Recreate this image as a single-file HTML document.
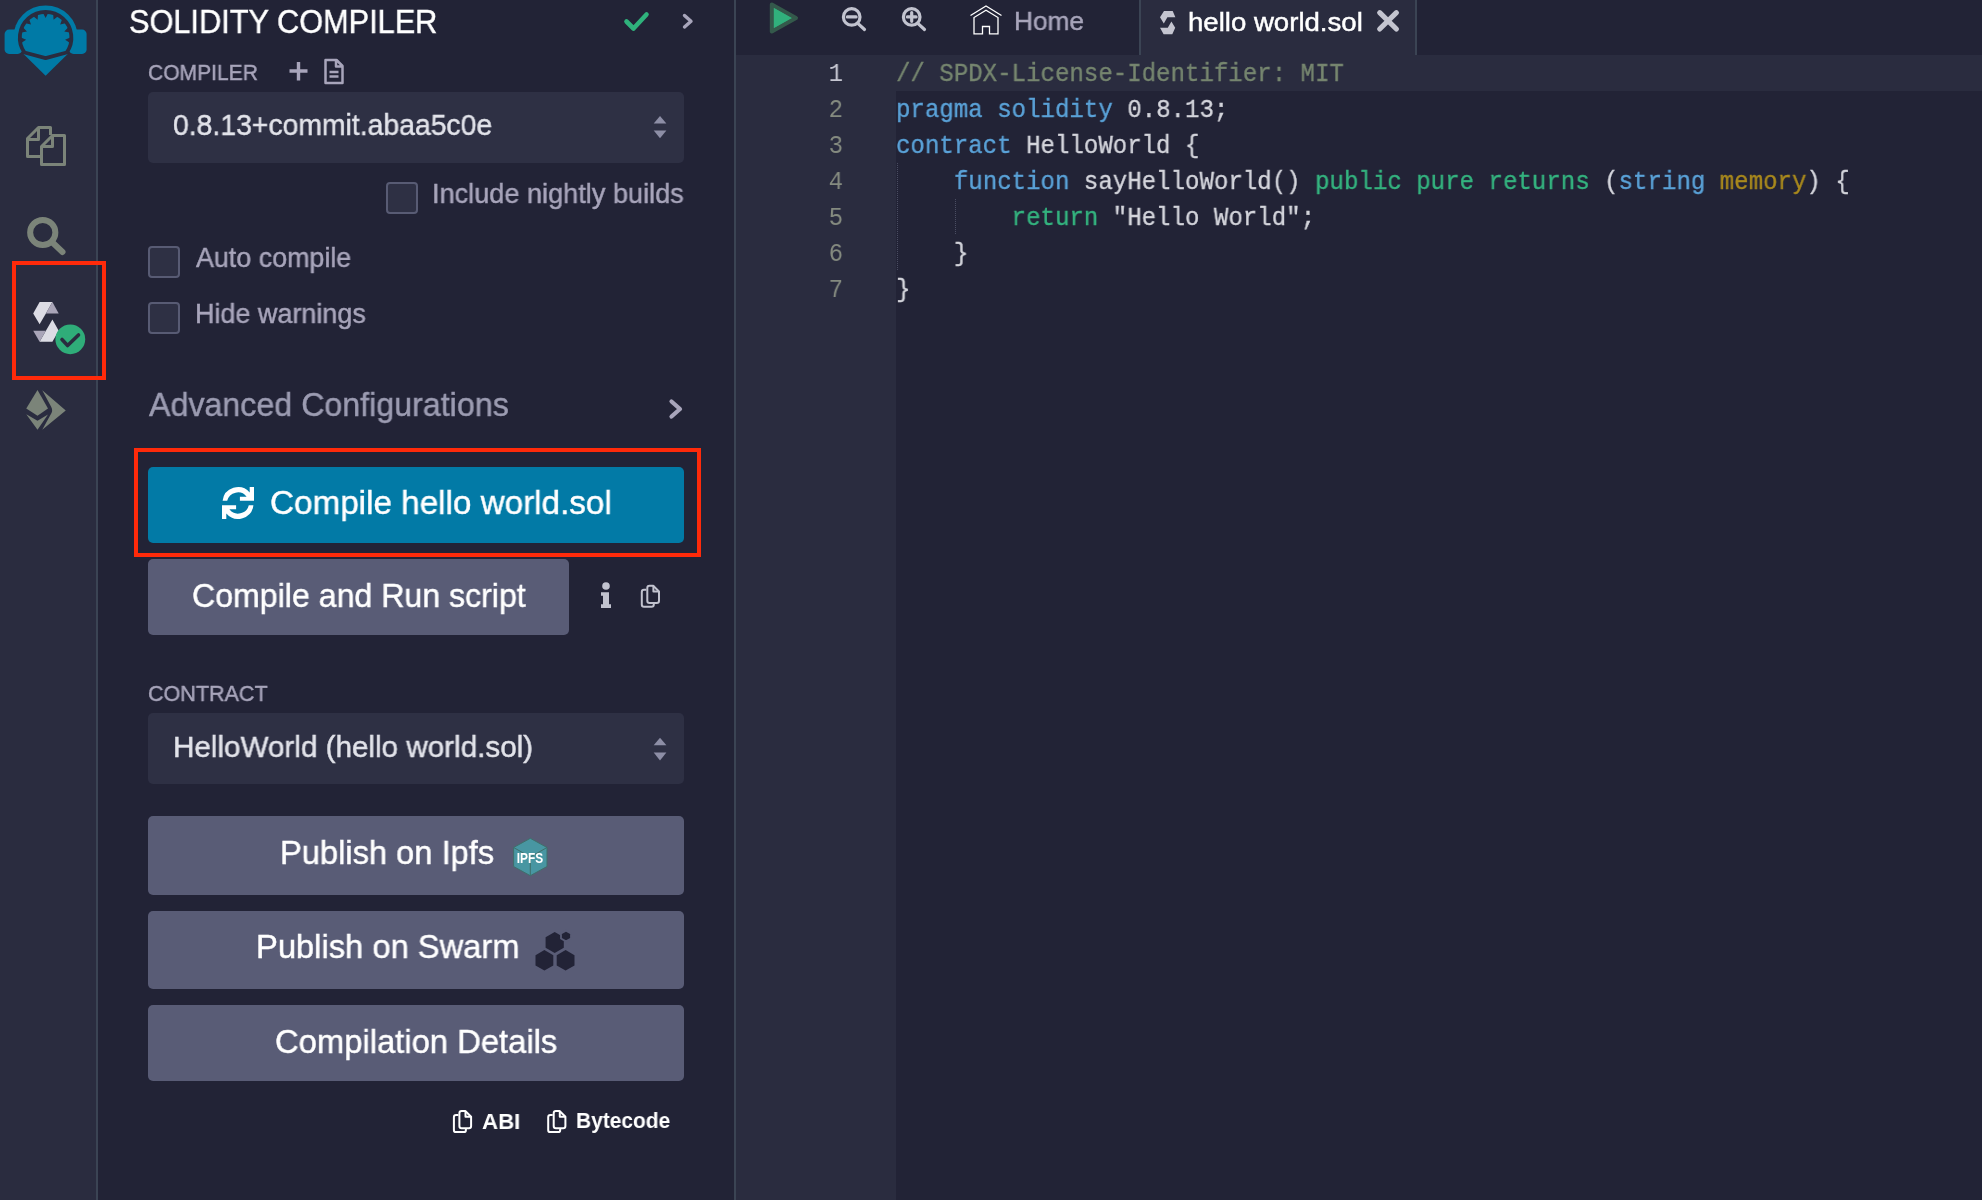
<!DOCTYPE html>
<html><head><meta charset="utf-8">
<style>
html,body{margin:0;padding:0;}
body{width:1982px;height:1200px;overflow:hidden;background:#222336;position:relative;font-family:"Liberation Sans",sans-serif;}
.abs{position:absolute;}
.t{position:absolute;white-space:pre;line-height:1;transform-origin:0 0;will-change:transform;font-family:"Liberation Sans",sans-serif;-webkit-text-stroke:0.45px currentColor;}
#icons{position:absolute;left:0;top:0;width:96px;height:1200px;background:#2a2c3f;}
#b1{position:absolute;left:96px;top:0;width:2px;height:1200px;background:#3b4454;}
#b2{position:absolute;left:734px;top:0;width:2px;height:1200px;background:#3b4454;}
.sel{position:absolute;left:148px;width:536px;height:71px;background:#2e3044;border-radius:5px;}
.btn{position:absolute;left:148px;width:536px;border-radius:5px;background:#595c76;}
.cb{position:absolute;width:28px;height:28px;border:2px solid #585b74;border-radius:4px;background:#2e3044;}
.red{position:absolute;border:4px solid #ff2a0a;box-sizing:border-box;}
#gutter{position:absolute;left:736px;top:55px;width:160px;height:1145px;background:#2a2c3f;}
#active{position:absolute;left:736px;top:55px;width:1246px;height:36px;background:#2a2c3f;}
#tab{position:absolute;left:1141px;top:0;width:274px;height:55px;background:#2a2c3f;}
.tb{position:absolute;top:0;width:2px;height:55px;background:#3b4454;}
#code{position:absolute;left:896.3px;top:0;will-change:transform;transform:scaleX(0.9261);transform-origin:0 0;}
.cl{position:absolute;left:0;white-space:pre;-webkit-text-stroke:0.35px currentColor;font-family:"Liberation Mono",monospace;font-size:26px;line-height:1;color:#c9cad3;}
.ln{position:absolute;left:0;width:30px;text-align:right;white-space:pre;font-family:"Liberation Mono",monospace;font-size:26px;line-height:1;}
#nums{position:absolute;will-change:transform;left:813px;top:0;transform:scaleX(0.9261);transform-origin:100% 0;width:30px;}
.cm{color:#76866f;}
.kb{color:#5aa2d8;}
.kg{color:#34b37f;}
.ky{color:#a9891d;}
.df{color:#d4d5dc;}
.guide{position:absolute;width:0;border-left:1px dotted #4a4d62;}
</style></head><body>
<div id="icons"></div>
<div id="b1"></div>
<div id="b2"></div>

<!-- editor -->
<div id="gutter"></div>
<div id="active"></div>
<div id="tab"></div>
<div class="tb" style="left:1139px"></div>
<div class="tb" style="left:1415px"></div>
<div class="guide" style="left:897px;top:163px;height:107px"></div>
<div class="guide" style="left:955px;top:199px;height:35px"></div>
<div id="nums">
<div class="ln" style="top:61.18px;color:#c6c7d2">1</div>
<div class="ln" style="top:97.18px;color:#858b80">2</div>
<div class="ln" style="top:133.18px;color:#858b80">3</div>
<div class="ln" style="top:169.18px;color:#858b80">4</div>
<div class="ln" style="top:205.18px;color:#858b80">5</div>
<div class="ln" style="top:241.18px;color:#858b80">6</div>
<div class="ln" style="top:277.18px;color:#858b80">7</div>

</div>
<div id="code">
<div class="cl" style="top:61.18px"><span class="cm">// SPDX-License-Identifier: MIT</span></div>
<div class="cl" style="top:97.18px"><span class="kb">pragma</span> <span class="kb">solidity</span> <span class="df">0.8.13;</span></div>
<div class="cl" style="top:133.18px"><span class="kb">contract</span> <span class="df">HelloWorld {</span></div>
<div class="cl" style="top:169.18px">    <span class="kb">function</span> <span class="df">sayHelloWorld()</span> <span class="kg">public</span> <span class="kg">pure</span> <span class="kg">returns</span> <span class="df">(</span><span class="kb">string</span> <span class="ky">memory</span><span class="df">) {</span></div>
<div class="cl" style="top:205.18px">        <span class="kg">return</span> <span class="df">"Hello World";</span></div>
<div class="cl" style="top:241.18px">    <span class="df">}</span></div>
<div class="cl" style="top:277.18px"><span class="df">}</span></div>

</div>

<!-- side panel shapes -->
<div class="sel" style="top:92px"></div>
<div class="sel" style="top:713px;height:71px"></div>
<div class="cb" style="left:386px;top:182px"></div>
<div class="cb" style="left:148px;top:246px"></div>
<div class="cb" style="left:148px;top:302px"></div>
<div class="btn" style="top:467px;height:76px;background:#027aa6"></div>
<div class="btn" style="top:559px;height:76px;width:421px"></div>
<div class="btn" style="top:816px;height:79px"></div>
<div class="btn" style="top:911px;height:78px"></div>
<div class="btn" style="top:1005px;height:76px"></div>
<div class="red" style="left:134px;top:448px;width:567px;height:109px"></div>
<div class="red" style="left:12px;top:261px;width:94px;height:119px"></div>

<div class="t" style="left:129.36px;top:5.76px;font-size:32.54px;color:#ffffff;font-weight:normal;transform:scaleX(0.9443)">SOLIDITY COMPILER</div>
<div class="t" style="left:147.75px;top:62.34px;font-size:22.04px;color:#a8a5bb;font-weight:normal;transform:scaleX(0.9544)">COMPILER</div>
<div class="t" style="left:173.47px;top:111.30px;font-size:29.18px;color:#e2e3ea;font-weight:normal;transform:scaleX(0.9718)">0.8.13+commit.abaa5c0e</div>
<div class="t" style="left:432.36px;top:180.02px;font-size:27.62px;color:#a8a5bb;font-weight:normal;transform:scaleX(0.9821)">Include nightly builds</div>
<div class="t" style="left:196.10px;top:243.83px;font-size:27.49px;color:#a8a5bb;font-weight:normal;transform:scaleX(0.9772)">Auto compile</div>
<div class="t" style="left:194.84px;top:300.07px;font-size:27.32px;color:#a8a5bb;font-weight:normal;transform:scaleX(0.9868)">Hide warnings</div>
<div class="t" style="left:148.50px;top:388.90px;font-size:32.84px;color:#9c9cb2;font-weight:normal;transform:scaleX(0.9807)">Advanced Configurations</div>
<div class="t" style="left:269.84px;top:486.48px;font-size:33.58px;color:#ffffff;font-weight:normal;transform:scaleX(0.9901)">Compile hello world.sol</div>
<div class="t" style="left:191.69px;top:579.49px;font-size:33.09px;color:#ffffff;font-weight:normal;transform:scaleX(0.9708)">Compile and Run script</div>
<div class="t" style="left:147.72px;top:683.09px;font-size:22.58px;color:#a8a5bb;font-weight:normal;transform:scaleX(0.9537)">CONTRACT</div>
<div class="t" style="left:173.23px;top:732.06px;font-size:29.82px;color:#e2e3ea;font-weight:normal;transform:scaleX(0.9940)">HelloWorld (hello world.sol)</div>
<div class="t" style="left:280.39px;top:836.25px;font-size:33.14px;color:#ffffff;font-weight:normal;transform:scaleX(0.9854)">Publish on Ipfs</div>
<div class="t" style="left:255.98px;top:931.24px;font-size:32.80px;color:#ffffff;font-weight:normal;transform:scaleX(0.9969)">Publish on Swarm</div>
<div class="t" style="left:274.56px;top:1024.83px;font-size:33.64px;color:#ffffff;font-weight:normal;transform:scaleX(0.9745)">Compilation Details</div>
<div class="t" style="left:481.73px;top:1109.76px;font-size:22.73px;color:#ffffff;font-weight:bold;transform:scaleX(0.9798);-webkit-text-stroke:0">ABI</div>
<div class="t" style="left:575.93px;top:1110.32px;font-size:22.07px;color:#ffffff;font-weight:bold;transform:scaleX(0.9494);-webkit-text-stroke:0">Bytecode</div>
<div class="t" style="left:1013.60px;top:8.21px;font-size:26.69px;color:#a8a5bb;font-weight:normal;transform:scaleX(0.9845)">Home</div>
<div class="t" style="left:1188.27px;top:8.90px;font-size:26.11px;color:#ffffff;font-weight:normal;transform:scaleX(1.0564)">hello world.sol</div>

<svg class="abs" style="left:0;top:0" width="1982" height="1200" viewBox="0 0 1982 1200">
  <!-- remix logo -->
  <g fill="#007aa6">
    <path d="M13.4 37.6 A32.2 32.2 0 0 1 77.8 37.6 Z"/>
    <rect x="4.6" y="29.6" width="17.6" height="24.3" rx="4.5"/>
    <rect x="69" y="29.6" width="17.6" height="24.3" rx="4.5"/>
    <circle cx="45.6" cy="37.6" r="26"/>
    <path d="M24.5 52.5 L45.6 58.2 L66.7 52.5 Z"/>
    <path d="M23.5 54 H67.7 L45.6 75.8 Z"/>
  </g>
  <path d="M24.5 52.5 A25.8 25.8 0 1 1 66.7 52.5 L45.6 58.2 Z" fill="none" stroke="#2a2c3f" stroke-width="3.8" stroke-linejoin="round"/>
  <path fill="#2a2c3f" d="M45.60 18.00 L43.00 13.10 L48.20 13.10 Z M37.63 19.69 L33.26 16.28 L38.01 14.16 Z M31.03 24.49 L25.65 23.14 L29.13 19.27 Z M26.96 31.54 L21.50 32.50 L23.10 27.56 Z M26.11 39.65 L21.51 42.75 L20.96 37.58 Z M53.57 19.69 L53.19 14.16 L57.94 16.28 Z M60.17 24.49 L62.07 19.27 L65.55 23.14 Z M64.24 31.54 L68.10 27.56 L69.70 32.50 Z M65.09 39.65 L70.24 37.58 L69.69 42.75 Z"/>

  <!-- files icon -->
  <g fill="none" stroke="#7b8479" stroke-width="3" stroke-linejoin="round">
    <path d="M50.5 135 V127.5 H38.5 L27.5 138.5 V156.5 H41"/>
    <path d="M38.5 127.5 V139.5 H27.5"/>
    <path d="M52.5 135.5 H64.5 V164.5 H41.5 V146.5 Z"/>
    <path d="M52.5 135.5 V146.5 H41.5"/>
  </g>
  <!-- search icon -->
  <g fill="none" stroke="#7b8479" stroke-width="6" stroke-linecap="round">
    <circle cx="42.75" cy="232.5" r="12.6"/>
    <path d="M52.5 242.5 L62.5 252"/>
  </g>
  <!-- solidity icon -->
  <g>
    <path d="M39.6 302.1 L52.4 302.1 L45.9 313.5 L39.6 324.3 L33.2 313.5 Z" fill="#dcdce4"/>
    <path d="M52.4 302.1 L58.7 313.5 L45.9 313.5 Z" fill="#a9a5b8"/>
    <path d="M52.4 319.5 L58.7 330.8 L52.4 341.7 L39.6 341.7 L45.9 330.8 Z" fill="#dcdce4"/>
    <path d="M33.2 330.8 L45.9 330.8 L39.6 341.7 Z" fill="#a9a5b8"/>
    <circle cx="70.3" cy="339.3" r="14.9" fill="#2fad79"/>
    <path d="M62 339.5 L67.6 345.5 L78.5 335" fill="none" stroke="#2a2c3f" stroke-width="3.6" stroke-linecap="round" stroke-linejoin="round"/>
  </g>
  <!-- deploy icon -->
  <g fill="#7b8479">
    <path d="M37.5 390 L48 408.5 L37.5 415.75 L26.25 408.5 Z"/>
    <path d="M26.25 414.25 L37.5 420.75 L48 414.5 L37.5 429.75 Z"/>
    <path d="M42.25 390.25 L65.75 410.5 L42.25 429.75 L51.5 413 Q53 410 51 406.5 Z"/>
  </g>

  <!-- header check + chevron -->
  <path d="M626.5 21.5 L633.5 28.5 L646.5 14.5" fill="none" stroke="#2fb27c" stroke-width="4.6" stroke-linecap="round" stroke-linejoin="round"/>
  <path d="M684.5 15.5 L691 21.3 L684.5 27" fill="none" stroke="#a8a5bb" stroke-width="3.4" stroke-linecap="round" stroke-linejoin="round"/>

  <!-- compiler + and file icon -->
  <path d="M298.5 62 V80.5 M289.5 71 H307.5" stroke="#a8a5bb" stroke-width="3.4" fill="none"/>
  <path d="M325.5 60 H336.5 L342.5 66 V83 H325.5 Z M336 60 V66.5 H342.5 M329.5 72 H338.5 M329.5 76.5 H338.5" stroke="#a8a5bb" stroke-width="2.5" fill="none" stroke-linejoin="round"/>

  <!-- select arrows -->
  <g fill="#8d8ea6">
    <path d="M653.7 123.5 L660 116 L666.4 123.5 Z"/>
    <path d="M653.7 130.5 L660 138.2 L666.4 130.5 Z"/>
    <path d="M653.7 745.2 L660 737.7 L666.4 745.2 Z"/>
    <path d="M653.7 752.5 L660 760.4 L666.4 752.5 Z"/>
  </g>

  <!-- advanced chevron -->
  <path d="M671.5 401.5 L680 409 L671.5 416.5" fill="none" stroke="#a8a5bb" stroke-width="4.2" stroke-linecap="round" stroke-linejoin="round"/>

  <!-- sync icon -->
  <g fill="#ffffff">
    <path d="M222.6 500.8 A15.5 15.5 0 0 1 249.7 492.4 V486.9 H254 V500.8 H239.9 V496.7 H246.6 A11 11 0 0 0 227.2 500.8 Z"/>
    <path d="M253.4 505.2 A15.5 15.5 0 0 1 226.3 513.6 V519.1 H222 V505.2 H236.1 V509.3 H229.4 A11 11 0 0 0 248.8 505.2 Z"/>
  </g>

  <!-- info + copy icon -->
  <defs>
    <g id="cpy" fill="none" stroke-width="2" stroke-linejoin="round">
      <path d="M12.4 1 H8.7 Q6.5 1 6.5 3.2 V16 Q6.5 18.3 8.7 18.3 H16 Q18.2 18.3 18.2 16 V6.8 Z"/>
      <path d="M12.6 1 V6.8 H18.2"/>
      <path d="M5.5 5.1 H3.2 Q1 5.1 1 7.3 V19.9 Q1 22.1 3.2 22.1 H10.8 Q13 22.1 13 19.9 V18.3"/>
    </g>
  </defs>
  <g fill="#c2c3cf">
    <circle cx="606" cy="586" r="3.8"/>
    <path d="M601 592.2 H609 V604.2 H611 V608 H601 V604.2 H603 V595.8 H601 Z"/>
  </g>
  <use href="#cpy" x="640.8" y="584.7" stroke="#c2c3cf"/>

  <!-- ipfs -->
  <g>
    <path d="M530.3 838.3 L547 847.5 L547 866.5 L530.3 875.7 L513.6 866.5 L513.6 847.5 Z" fill="#4896a2" stroke="#3f6f6a" stroke-width="1"/>
    <path d="M513.6 847.5 L530.3 857 L547 847.5 M530.3 857 V875.7" fill="none" stroke="#3f6f6a" stroke-width="1"/>
    <text x="530" y="863" font-family="Liberation Sans" font-weight="bold" font-size="14" fill="#ffffff" text-anchor="middle" transform="translate(530 0) scale(0.85 1) translate(-530 0)">IPFS</text>
  </g>
  <!-- swarm -->
  <g fill="#222336">
    <path d="M544.4 950 L553.3 955.2 L553.3 965.5 L544.4 970.6 L535.5 965.5 L535.5 955.2 Z"/>
    <path d="M565.6 950 L574.5 955.2 L574.5 965.5 L565.6 970.6 L556.7 965.5 L556.7 955.2 Z"/>
    <path d="M554.7 932 L563.8 937.3 L563.8 947.8 L554.7 953 L545.6 947.8 L545.6 937.3 Z"/>
    <path d="M566 930.6 L571 933.5 L571 938.5 L566 941.4 L561 938.5 L561 933.5 Z" stroke="#595c76" stroke-width="1.8"/>
  </g>
  <path d="M561 933.5 L566 941.4" stroke="#595c76" stroke-width="0"/>

  <!-- abi / bytecode copy -->
  <use href="#cpy" x="452.9" y="1110" stroke="#ffffff"/>
  <use href="#cpy" x="547.2" y="1110" stroke="#ffffff"/>

  <!-- editor icons -->
  <path d="M771.8 4.5 L796 18 L771.8 31.5 Z" fill="#31b07c" stroke="#34594b" stroke-width="4" stroke-linejoin="round"/>
  <path d="M774.2 8.3 L791.2 18 L774.2 27.8 Z" fill="#31b07c"/>
  <g fill="none" stroke="#c2c3cf" stroke-width="3.2" stroke-linecap="round">
    <circle cx="851.7" cy="16.9" r="8.3"/>
    <path d="M857.8 23.3 L864.5 29.5"/>
    <path d="M847.3 16.9 H856.1"/>
    <circle cx="911.7" cy="16.9" r="8.3"/>
    <path d="M917.8 23.3 L924.5 29.5"/>
    <path d="M907.3 16.9 H916.1 M911.7 12.5 V21.3"/>
  </g>
  <!-- home -->
  <g fill="none" stroke="#ffffff" stroke-width="1.3">
    <path d="M970.5 15.5 L986 6 L1001.5 15.5"/>
    <path d="M974 33.8 V17.5 L986 10.3 L998 17.5 V33.8 H989.5 V26.5 H982.5 V33.8 Z"/>
  </g>
  <!-- tab sol icon -->
  <g fill="#c4c5d0">
    <path d="M1164 11 H1172.7 L1175.4 17.3 H1167.4 L1163.8 23.6 L1160 17.3 Z"/>
    <path d="M1171.4 21.4 L1175.2 27.7 L1172.3 34.3 H1163.6 L1160 27.7 H1167.8 Z"/>
  </g>
  <!-- close x -->
  <path d="M1379.7 12.7 L1396.4 29 M1396.4 12.7 L1379.7 29" stroke="#c4c5d0" stroke-width="5.2" stroke-linecap="round"/>
</svg>
</body></html>
